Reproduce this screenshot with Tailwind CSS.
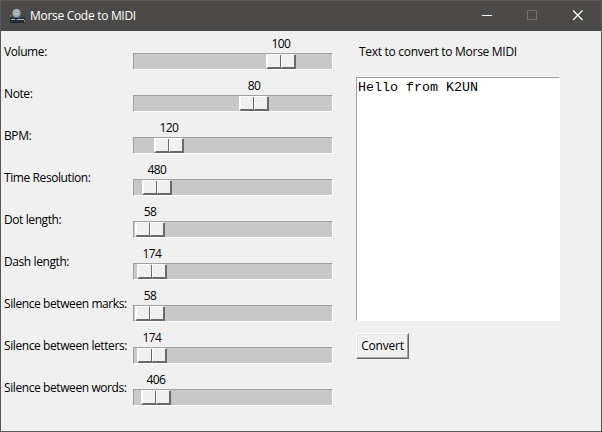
<!DOCTYPE html>
<html lang="en"><head><meta charset="utf-8"><title>Morse Code to MIDI</title>
<script src="https://cdn.jsdelivr.net/npm/@tailwindcss/browser@4"></script></head>
<body class="overflow-hidden">
<div class="w-[602px] h-[432px] bg-[#f0f0f0] border border-[#5a5957] font-['Open_Sans',sans-serif] text-[12px] leading-[16px] text-black flex flex-col whitespace-nowrap">
<header class="h-[30px] shrink-0 bg-[#4c4a48] text-white flex items-center">
<svg class="ml-2 mr-1 shrink-0" width="17" height="16" viewBox="0 0 17 16"><path d="M1 9h15v6H1z" fill="#26313c"/><circle cx="7.5" cy="5" r="4.2" fill="#9aa8ad"/><circle cx="7.5" cy="4.8" r="2" fill="#c8ced0"/><path d="M6.500 4.500h2" stroke="#69777e"/><path d="M4 9.500h8" stroke="#4b5a68"/><path d="M2 11.500h4M8 11.500h7" stroke="#9fb3c1"/><path d="M1 14.500h14" stroke="#172333"/><path d="M1.500 7v2M15.500 12v2" stroke="#a78131"/></svg>
<h1 class="flex-1 tracking-[-0.3px]">Morse Code to MIDI</h1>
<svg width="138" height="30" viewBox="0 0 138 30" fill="none" shape-rendering="crispEdges"><path d="M19 14.500h10" stroke="#fff"/><rect x="64.500" y="9.500" width="9" height="9" stroke="#737170"/><path d="M110 9.500l9.500 9.500M119.500 9.500l-9.500 9.500" stroke="#fff" stroke-width="1.200" shape-rendering="auto"/></svg>
</header>
<main class="flex flex-1">
<section id="rows" class="w-[355px] shrink-0"></section>
<section class="flex flex-col items-start">
<label class="ml-[3px] mt-[13px] h-4 tracking-[-0.29px]">Text to convert to Morse MIDI</label>
<div class="mt-[17px] w-[204px] h-[244px] bg-white border border-t-[#a0a0a0] border-l-[#a0a0a0] border-r-white border-b-white font-['Liberation_Mono',monospace] text-[13.33px] leading-[16px] pl-px pt-[2px]">Hello from K2UN</div>
<button class="mt-3 w-[53px] h-[26px] border border-t-white border-l-white border-r-[#696969] border-b-[#696969] p-0 tracking-[-0.2px]"><span class="flex items-center justify-center h-full border border-t-[#e3e3e3] border-l-[#e3e3e3] border-r-[#a0a0a0] border-b-[#a0a0a0]">Convert</span></button>
</section>
</main>
</div>
<script>
const rows=[["Volume:",100,132],["Note:",80,105],["BPM:",120,20],["Time Resolution:",480,8],["Dot length:",58,1],["Dash length:",174,3],["Silence between marks:",58,1],["Silence between letters:",174,3],["Silence between words:",406,7]];
document.getElementById("rows").innerHTML=rows.map(([l,v,x])=>`<div class="h-[42px] flex"><label class="w-[132px] pl-[3px] pt-[13px] tracking-[-0.41px]">${l}</label><div class="w-[200px] pt-[5px]"><output class="block h-4 w-[30px] text-center tracking-[-0.6px]" style="margin-left:${x+1}px">${v}</output><div class="mt-px h-[17px] border border-t-[#a0a0a0] border-l-[#a0a0a0] border-r-white border-b-white bg-[#c8c8c8]"><div class="w-[30px] h-[15px] flex bg-[#f0f0f0] border border-t-white border-l-white border-r-[#696969] border-b-[#696969]" style="margin-left:${x}px"><i class="w-[14px] border-l border-b border-r border-l-white border-b-[#696969] border-r-[#696969]"></i><i class="w-[14px] border-l border-b border-r border-l-white border-b-[#696969] border-r-[#696969]"></i></div></div></div></div>`).join("");
</script>
</body></html>
